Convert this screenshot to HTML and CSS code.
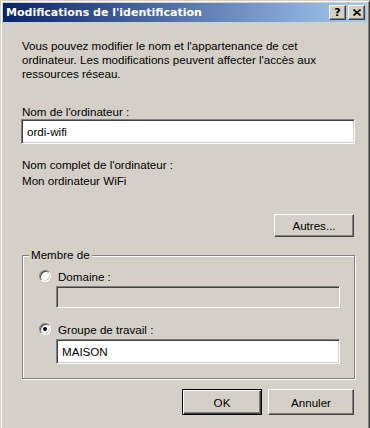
FILE: index.html
```html
<!DOCTYPE html>
<html lang="fr">
<head>
<meta charset="utf-8">
<title>Modifications de l'identification</title>
<link rel="stylesheet" href="styles.css">
</head>
<body>
<div class="window">
  <div class="titlebar">
    <span class="title">Modifications de l'identification</span>
    <div class="tb-buttons">
      <span class="tb-btn help">?</span>
      <span class="tb-btn close">
        <svg width="8" height="7" viewBox="0 0 8 7"><path d="M0.5 0.5 L7.5 6.5 M7.5 0.5 L0.5 6.5" stroke="#000" stroke-width="1.6" fill="none"/></svg>
      </span>
    </div>
  </div>
  <div class="content">
    <p class="intro">Vous pouvez modifier le nom et l'appartenance de cet<br>ordinateur. Les modifications peuvent affecter l'accès aux<br>ressources réseau.</p>
    <div class="name-label">Nom de l'ordinateur :</div>
    <div class="field name-field">ordi-wifi</div>
    <div class="fullname">
      <div>Nom complet de l'ordinateur :</div>
      <div>Mon ordinateur WiFi</div>
    </div>
    <div class="row-right"><span class="btn">Autres...</span></div>
    <div class="group">
      <span class="legend">Membre de</span>
      <div class="radio-row"><span class="radio"></span><span>Domaine :</span></div>
      <div class="field disabled sub-field"></div>
      <div class="radio-row second"><span class="radio checked"></span><span>Groupe de travail :</span></div>
      <div class="field sub-field">MAISON</div>
    </div>
    <div class="actions"><span class="btn default">OK</span><span class="btn cancel">Annuler</span></div>
  </div>
</div>
</body>
</html>
```
FILE: styles.css
```css
html, body {
  margin: 0;
  padding: 0;
}
body {
  width: 370px;
  height: 428px;
  overflow: hidden;
  background: #d4d0c8;
  font-family: "Liberation Sans", Arial, sans-serif;
  font-size: 11.6px;
  color: #000;
}
.window {
  box-sizing: border-box;
  width: 370px;
  height: 440px;
  border: 1px solid;
  border-color: #d4d0c8 #404040 #404040 #d4d0c8;
  padding: 2px;
  box-shadow: inset 1px 1px #fff, inset -1px -1px #808080;
  background: #d4d0c8;
}
.titlebar {
  height: 19px;
  display: flex;
  align-items: center;
  justify-content: space-between;
  padding: 0 2px 0 3px;
  background: linear-gradient(to right, #0a246a, #a6caf0);
}
.title {
  color: #fff;
  font-family: "DejaVu Sans", sans-serif;
  font-weight: bold;
  font-size: 11px;
}
.tb-buttons {
  display: flex;
  gap: 2px;
}
.tb-btn {
  box-sizing: border-box;
  width: 17px;
  height: 15px;
  border: 1px solid;
  border-color: #fff #404040 #404040 #fff;
  box-shadow: inset -1px -1px #808080;
  background: #d4d0c8;
  display: flex;
  align-items: center;
  justify-content: center;
  font-family: "DejaVu Sans", sans-serif;
  font-weight: bold;
  font-size: 11px;
  line-height: 1;
}
.content {
  padding: 17px 12px 0 18px;
}
.intro {
  margin: 0 0 0 1px;
  line-height: 14px;
}
.name-label {
  margin-top: 24px;
  line-height: 14px;
  padding-left: 1px;
}
.field {
  box-sizing: border-box;
  height: 25px;
  margin-top: 0;
  background: #fff;
  border: 1px solid;
  border-color: #808080 #fff #fff #808080;
  box-shadow: inset 1px 1px #404040, inset -1px -1px #d4d0c8;
  padding-left: 5px;
  display: flex;
  align-items: center;
}
.field.disabled {
  background: #d4d0c8;
}
.fullname {
  margin-top: 13px;
  line-height: 16px;
  padding-left: 1px;
}
.row-right {
  display: flex;
  justify-content: flex-end;
  margin-top: 25px;
  padding-right: 1px;
}
.btn {
  box-sizing: border-box;
  width: 80px;
  height: 23px;
  display: flex;
  align-items: center;
  justify-content: center;
  border: 1px solid;
  border-color: #fff #404040 #404040 #fff;
  box-shadow: inset -1px -1px #808080;
  background: #d4d0c8;
}
.btn.default {
  border-color: #000;
  box-shadow: inset 1px 1px #fff, inset -1px -1px #404040, inset -2px -2px #808080;
}
.group {
  position: relative;
  margin: 18px 0 0 1px;
  border: 1px solid #808080;
  box-shadow: 1px 1px #fff, inset 1px 1px #fff;
  padding: 12px 14px 14px 16px;
}
.legend {
  position: absolute;
  top: -8px;
  left: 6px;
  padding: 0 2px;
  line-height: 14px;
  background: #d4d0c8;
}
.radio-row {
  display: flex;
  align-items: center;
  gap: 7px;
  height: 16px;
}
.radio-row.second {
  margin-top: 13px;
}
.radio {
  box-sizing: border-box;
  width: 12px;
  height: 12px;
  border-radius: 50%;
  background: #fff;
  border: 1px solid;
  border-color: #808080 #fff #fff #808080;
  box-shadow: inset 1px 1px #404040, inset -1px -1px #d4d0c8;
  display: flex;
  align-items: center;
  justify-content: center;
}
.radio.checked::after {
  content: "";
  width: 4px;
  height: 4px;
  border-radius: 50%;
  background: #000;
}
.sub-field {
  margin-left: 17px;
  margin-top: 2px;
}
.sub-field.disabled {
  height: 22px;
}
.actions {
  display: flex;
  justify-content: flex-end;
  gap: 6px;
  margin-top: 10px;
  padding-right: 1px;
}
.actions .btn {
  height: 26px;
}
.btn.cancel {
  width: 86px;
}
```
